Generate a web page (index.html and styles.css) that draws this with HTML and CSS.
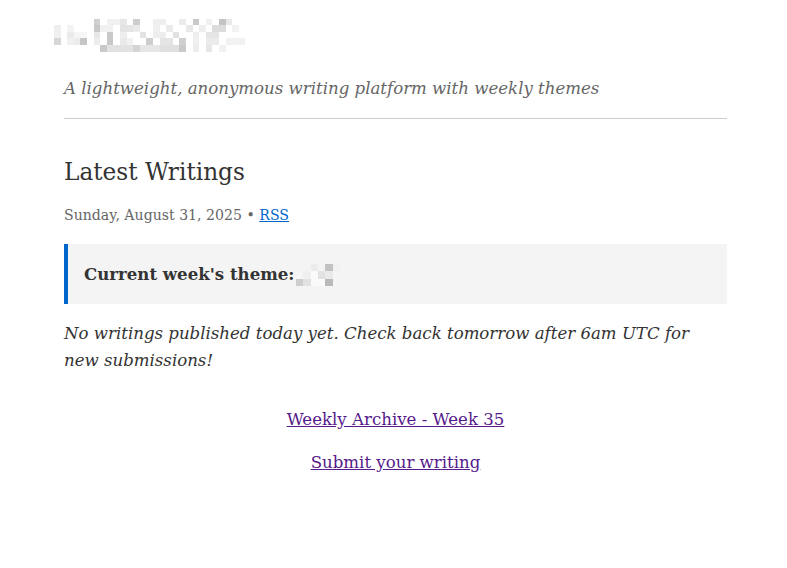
FILE: index.html
```html
<!DOCTYPE html>
<html lang="en">
<head>
<meta charset="utf-8">
<title>Latest Writings</title>
<link rel="stylesheet" href="styles.css">
</head>
<body>
<div class="page">
  <header class="site-header">
    <svg class="logo" width="198" height="34" viewBox="0 0 30 5" shape-rendering="crispEdges" aria-label="logo">
      <rect x="6" y="0" width="1" height="1" fill="#cfcfcf"/>
      <rect x="8" y="0" width="2" height="1" fill="#f0f0f0"/>
      <rect x="10" y="0" width="1" height="1" fill="#e6e6e6"/>
      <rect x="12" y="0" width="1" height="1" fill="#cdcdcd"/>
      <rect x="15" y="0" width="2" height="1" fill="#eeeeee"/>
      <rect x="19" y="0" width="1" height="1" fill="#ececec"/>
      <rect x="21" y="0" width="1" height="1" fill="#c9c9c9"/>
      <rect x="23" y="0" width="1" height="1" fill="#f0f0f0"/>
      <rect x="25" y="0" width="1" height="1" fill="#c4c4c4"/>
      <rect x="26" y="0" width="1" height="1" fill="#e8e8e8"/>
      <rect x="0" y="1" width="1" height="1" fill="#eeeeee"/>
      <rect x="2" y="1" width="1" height="1" fill="#f3f3f3"/>
      <rect x="6" y="1" width="1" height="1" fill="#c8c8c8"/>
      <rect x="7" y="1" width="2" height="1" fill="#f1f1f1"/>
      <rect x="10" y="1" width="2" height="1" fill="#e4e4e4"/>
      <rect x="12" y="1" width="1" height="1" fill="#eaeaea"/>
      <rect x="15" y="1" width="1" height="1" fill="#f0f0f0"/>
      <rect x="17" y="1" width="1" height="1" fill="#ebebeb"/>
      <rect x="20" y="1" width="1" height="1" fill="#e8e8e8"/>
      <rect x="22" y="1" width="1" height="1" fill="#eeeeee"/>
      <rect x="24" y="1" width="2" height="1" fill="#dcdcdc"/>
      <rect x="27" y="1" width="1" height="1" fill="#f2f2f2"/>
      <rect x="0" y="2" width="1" height="1" fill="#f0f0f0"/>
      <rect x="2" y="2" width="1" height="1" fill="#ebebeb"/>
      <rect x="3" y="2" width="2" height="1" fill="#f6f6f6"/>
      <rect x="6" y="2" width="1" height="1" fill="#e7e7e7"/>
      <rect x="8" y="2" width="1" height="1" fill="#cacaca"/>
      <rect x="10" y="2" width="1" height="1" fill="#eeeeee"/>
      <rect x="13" y="2" width="1" height="1" fill="#e3e3e3"/>
      <rect x="15" y="2" width="2" height="1" fill="#ededed"/>
      <rect x="18" y="2" width="1" height="1" fill="#e1e1e1"/>
      <rect x="21" y="2" width="1" height="1" fill="#eeeeee"/>
      <rect x="23" y="2" width="2" height="1" fill="#e5e5e5"/>
      <rect x="0" y="3" width="1" height="1" fill="#d6d6d6"/>
      <rect x="2" y="3" width="1" height="1" fill="#f0f0f0"/>
      <rect x="3" y="3" width="1" height="1" fill="#ececec"/>
      <rect x="4" y="3" width="1" height="1" fill="#c6c6c6"/>
      <rect x="6" y="3" width="1" height="1" fill="#ededed"/>
      <rect x="8" y="3" width="1" height="1" fill="#c8c8c8"/>
      <rect x="10" y="3" width="1" height="1" fill="#e9e9e9"/>
      <rect x="11" y="3" width="1" height="1" fill="#f1f1f1"/>
      <rect x="14" y="3" width="1" height="1" fill="#cdcdcd"/>
      <rect x="16" y="3" width="2" height="1" fill="#e4e4e4"/>
      <rect x="19" y="3" width="1" height="1" fill="#cfcfcf"/>
      <rect x="21" y="3" width="1" height="1" fill="#f0f0f0"/>
      <rect x="23" y="3" width="2" height="1" fill="#ebebeb"/>
      <rect x="26" y="3" width="3" height="1" fill="#f2f2f2"/>
      <rect x="7" y="4" width="1" height="1" fill="#c9c9c9"/>
      <rect x="8" y="4" width="4" height="1" fill="#e2e2e2"/>
      <rect x="12" y="4" width="1" height="1" fill="#d4d4d4"/>
      <rect x="13" y="4" width="3" height="1" fill="#e6e6e6"/>
      <rect x="16" y="4" width="3" height="1" fill="#e0e0e0"/>
      <rect x="19" y="4" width="1" height="1" fill="#c9c9c9"/>
      <rect x="21" y="4" width="1" height="1" fill="#ececec"/>
      <rect x="23" y="4" width="1" height="1" fill="#e6e6e6"/>
      <rect x="25" y="4" width="1" height="1" fill="#f2f2f2"/>
    </svg>
    <p class="tagline">A lightweight, anonymous writing platform with weekly themes</p>
  </header>

  <main>
    <h2 class="section-title">Latest Writings</h2>
    <p class="meta">Sunday, August 31, 2025 • <a class="rss" href="#rss">RSS</a></p>

    <div class="theme">
      <strong>Current week's theme:</strong><svg class="theme-word" width="44" height="24" viewBox="0 0 6 3" shape-rendering="crispEdges" aria-label="theme">
        <rect x="0" y="0" width="2" height="1" fill="#f4f4f4"/>
        <rect x="2" y="0" width="1" height="1" fill="#ececec"/>
        <rect x="4" y="0" width="1" height="1" fill="#c2c2c2"/>
        <rect x="5" y="0" width="1" height="1" fill="#f1f1f1"/>
        <rect x="0" y="1" width="1" height="1" fill="#f6f6f6"/>
        <rect x="1" y="1" width="1" height="1" fill="#f0f0f0"/>
        <rect x="2" y="1" width="1" height="1" fill="#fafafa"/>
        <rect x="3" y="1" width="1" height="1" fill="#e2e2e2"/>
        <rect x="4" y="1" width="1" height="1" fill="#e9e9e9"/>
        <rect x="0" y="2" width="1" height="1" fill="#cdcdcd"/>
        <rect x="1" y="2" width="1" height="1" fill="#e2e2e2"/>
        <rect x="2" y="2" width="2" height="1" fill="#fafafa"/>
        <rect x="4" y="2" width="1" height="1" fill="#b9b9b9"/>
        <rect x="5" y="2" width="1" height="1" fill="#f5f5f5"/>
      </svg>
    </div>

    <p class="empty">No writings published today yet. Check back tomorrow after 6am UTC for new submissions!</p>

    <nav class="links">
      <a class="visited" href="#archive">Weekly Archive - Week 35</a>
      <a class="visited" href="#submit">Submit your writing</a>
    </nav>
  </main>
</div>
</body>
</html>
```

FILE: styles.css
```css
html, body {
  margin: 0;
  padding: 0;
  background: #ffffff;
}

body {
  font-family: "DejaVu Serif", "Liberation Serif", serif;
  color: #333333;
  font-size: 16.6px;
  line-height: 27px;
}

.page {
  width: 663px;
  padding: 18px 0 40px 64px;
}

.site-header {
  border-bottom: 1px solid #cccccc;
  padding-bottom: 16px;
}

.logo {
  display: block;
  margin-left: -10px;
}

.tagline {
  margin: 23px 0 0;
  font-style: italic;
  color: #666666;
}

.section-title {
  margin: 37px 0 0;
  font-size: 23.24px;
  line-height: 31px;
  font-weight: normal;
  color: #333333;
}

.meta {
  margin: 16px 0 0;
  font-size: 0.85em;
  line-height: 24px;
  color: #666666;
}

.rss {
  color: #0066cc;
}

.theme {
  margin-top: 17px;
  background: #f4f4f4;
  border-left: 4px solid #0066cc;
  padding: 17px 16px 16px;
  display: flex;
  align-items: center;
}

.theme strong {
  font-weight: bold;
  color: #333333;
}

.theme-word {
  display: block;
  margin-left: 2px;
}

.empty {
  margin: 16px 0 0;
  font-style: italic;
  color: #333333;
}

.links {
  margin-top: 32px;
  display: flex;
  flex-direction: column;
  align-items: center;
  gap: 16px;
}

.links a.visited {
  color: #551a8b;
}
```
